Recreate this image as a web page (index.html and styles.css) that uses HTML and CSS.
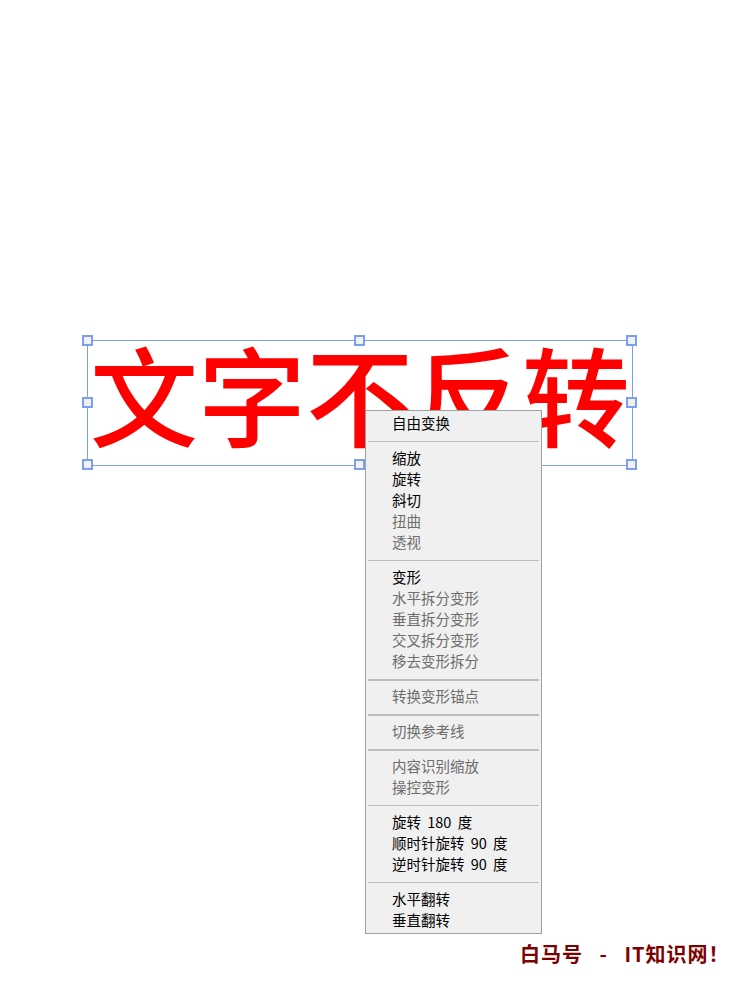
FILE: index.html
```html
<!DOCTYPE html>
<html lang="zh-CN">
<head>
<meta charset="utf-8">
<title>文字不反转</title>
<link rel="stylesheet" href="styles.css">
</head>
<body>
<div class="canvas">
  <div class="selection">
    <span class="handle h-tl"></span>
    <span class="handle h-tc"></span>
    <span class="handle h-tr"></span>
    <span class="handle h-ml"></span>
    <span class="handle h-mr"></span>
    <span class="handle h-bl"></span>
    <span class="handle h-bc"></span>
    <span class="handle h-br"></span>
  </div>
  <div class="big-text">文字不反转</div>

  <ul class="menu">
    <li class="item">自由变换</li>
    <li class="sep"></li>
    <li class="item">缩放</li>
    <li class="item">旋转</li>
    <li class="item">斜切</li>
    <li class="item off">扭曲</li>
    <li class="item off">透视</li>
    <li class="sep"></li>
    <li class="item">变形</li>
    <li class="item off">水平拆分变形</li>
    <li class="item off">垂直拆分变形</li>
    <li class="item off">交叉拆分变形</li>
    <li class="item off">移去变形拆分</li>
    <li class="sep thick"></li>
    <li class="item off">转换变形锚点</li>
    <li class="sep thick"></li>
    <li class="item off">切换参考线</li>
    <li class="sep thick"></li>
    <li class="item off">内容识别缩放</li>
    <li class="item off">操控变形</li>
    <li class="sep"></li>
    <li class="item">旋转 180 度</li>
    <li class="item">顺时针旋转 90 度</li>
    <li class="item">逆时针旋转 90 度</li>
    <li class="sep"></li>
    <li class="item">水平翻转</li>
    <li class="item">垂直翻转</li>
  </ul>

  <div class="watermark">白马号 - IT知识网！</div>
</div>
</body>
</html>
```
FILE: styles.css
```css
html, body {
  margin: 0;
  padding: 0;
  background: #ffffff;
}

.canvas {
  position: relative;
  width: 748px;
  height: 993px;
  overflow: hidden;
  font-family: "Noto Sans CJK SC", "Noto Sans", sans-serif;
}

.selection {
  position: absolute;
  left: 87px;
  top: 340px;
  width: 544px;
  height: 124px;
  border: 1px solid #7d9ff0;
}

.handle {
  position: absolute;
  width: 7px;
  height: 7px;
  border: 2px solid #7d9ff0;
  background: #f1f1f1;
  margin-left: -6px;
  margin-top: -6px;
}

.h-tl { left: 0; top: 0; }
.h-tc { left: 50%; top: 0; }
.h-tr { left: 100%; top: 0; }
.h-ml { left: 0; top: 50%; }
.h-mr { left: 100%; top: 50%; }
.h-bl { left: 0; top: 100%; }
.h-bc { left: 50%; top: 100%; }
.h-br { left: 100%; top: 100%; }

.big-text {
  position: absolute;
  left: 90px;
  top: 338px;
  font-size: 108px;
  line-height: 1;
  font-weight: 500;
  color: #ff0000;
  white-space: nowrap;
}

.menu {
  position: absolute;
  left: 365px;
  top: 410px;
  width: 175px;
  margin: 0;
  padding: 2px 0;
  list-style: none;
  background: #f0f0f0;
  border: 1px solid #a0a0a0;
  font-size: 14.5px;
  color: #000000;
}

.item {
  height: 19px;
  line-height: 19px;
  padding: 0 0 2px 26px;
  white-space: nowrap;
  word-spacing: 3px;
}

.item.off {
  color: #6d6d6d;
}

.sep {
  height: 1px;
  margin: 7px 2px 6px;
  background: #bdbdbd;
}

.sep.thick {
  height: 2px;
  margin-bottom: 5px;
}

.watermark {
  position: absolute;
  left: 520px;
  top: 943px;
  font-size: 20px;
  line-height: 22px;
  font-weight: 700;
  color: #7d0000;
  letter-spacing: 1px;
  word-spacing: 11px;
  white-space: nowrap;
}
```
